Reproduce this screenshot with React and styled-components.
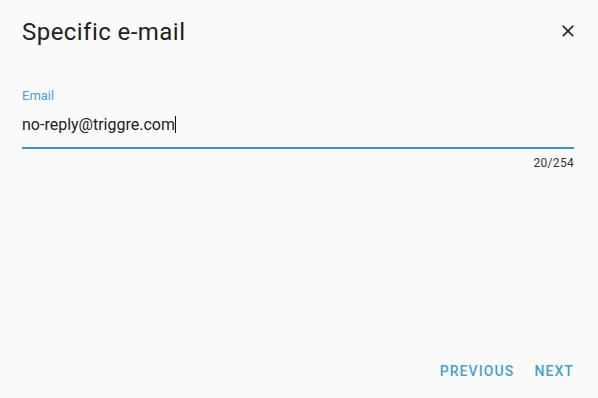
import React from "react";
import styled, { createGlobalStyle } from "styled-components";

const Global = createGlobalStyle`
  html, body { margin: 0; padding: 0; background: #fafafa; }
  body { font-family: Roboto, "Noto Sans", sans-serif; }
  #root { height: 398px; }
`;

const Dialog = styled.div`
  box-sizing: border-box;
  height: 398px;
  width: 598px;
  background: #fafafa;
  display: flex;
  flex-direction: column;
  padding: 0 24px 0 22px;
`;

const Header = styled.div`
  display: flex;
  align-items: center;
  justify-content: space-between;
  height: 64px;
`;

const Title = styled.h2`
  margin: 0;
  font-size: 24px;
  font-weight: 400;
  color: #212121;
  letter-spacing: 0.45px;
`;

const CloseButton = styled.button`
  border: none;
  background: none;
  padding: 0;
  margin-right: -6px;
  margin-top: -2px;
  width: 24px;
  height: 24px;
  display: flex;
  align-items: center;
  justify-content: center;
  color: #212121;
  cursor: pointer;
`;

const Field = styled.div`
  margin-top: 24px;
  display: flex;
  flex-direction: column;
`;

const Label = styled.label`
  font-size: 13px;
  color: #4a9fce;
  line-height: 15px;
`;

const InputRow = styled.div`
  display: flex;
  align-items: center;
  height: 46px;
  border-bottom: 2px solid #3d94c4;
  box-sizing: border-box;
  padding-bottom: 2px;
`;

const Value = styled.span`
  font-size: 16px;
  color: #212121;
`;

const Caret = styled.span`
  display: inline-block;
  width: 1px;
  height: 17px;
  background: #111;
  margin-left: 0;
`;

const Counter = styled.div`
  align-self: flex-end;
  margin-top: 7px;
  font-size: 12px;
  line-height: 14px;
  color: #333;
  letter-spacing: 0.3px;
`;

const Spacer = styled.div`
  flex: 1;
`;

const Actions = styled.div`
  display: flex;
  justify-content: flex-end;
  gap: 20px;
  height: 54px;
  align-items: center;
`;

const ActionButton = styled.button`
  border: none;
  background: none;
  padding: 0;
  font-family: Roboto, sans-serif;
  font-weight: 500;
  font-size: 14px;
  letter-spacing: 1.1px;
  color: #4a9fcb;
  text-transform: uppercase;
  cursor: pointer;
`;

export default function App() {
  return (
    <>
      <Global />
      <Dialog>
        <Header>
          <Title>Specific e-mail</Title>
          <CloseButton aria-label="close">
            <svg width="20" height="20" viewBox="0 0 24 24">
              <path
                d="M19 6.41 17.59 5 12 10.59 6.41 5 5 6.41 10.59 12 5 17.59 6.41 19 12 13.41 17.59 19 19 17.59 13.41 12z"
                fill="currentColor"
              />
            </svg>
          </CloseButton>
        </Header>
        <Field>
          <Label>Email</Label>
          <InputRow>
            <Value>no-reply@triggre.com</Value>
            <Caret />
          </InputRow>
          <Counter>20/254</Counter>
        </Field>
        <Spacer />
        <Actions>
          <ActionButton>Previous</ActionButton>
          <ActionButton>Next</ActionButton>
        </Actions>
      </Dialog>
    </>
  );
}
